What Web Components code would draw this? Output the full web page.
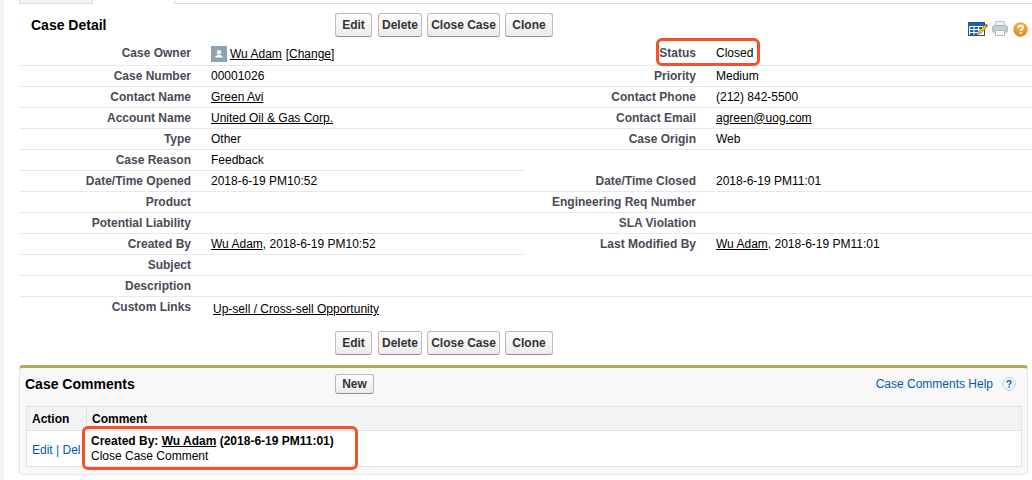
<!DOCTYPE html>
<html lang="en">
<head>
<meta charset="utf-8">
<title>Case Detail</title>
<style>
html,body{margin:0;padding:0;background:#fff;}
body{width:1032px;height:480px;overflow:hidden;font:12px/15px "Liberation Sans",Arial,sans-serif;color:#000;}
</style>
</head>
<body>
<case-page>
  <tab-strip slot="tabs"></tab-strip>
  <case-header>
    <span slot="title">Case Detail</span>
    <case-button style="width:37px">Edit</case-button><case-button style="width:44px;margin-left:1px">Delete</case-button><case-button style="width:73px">Close Case</case-button><case-button style="width:48px">Clone</case-button>
    <page-tools slot="tools"></page-tools>
  </case-header>
  <case-row>
    <case-field first drop label="Case Owner"><user-avatar></user-avatar><case-link>Wu Adam</case-link> <case-link style="margin-left:.5px">[Change]</case-link></case-field>
    <case-field first label="Status">Closed</case-field>
  </case-row>
  <case-row>
    <case-field label="Case Number">00001026</case-field>
    <case-field label="Priority">Medium</case-field>
  </case-row>
  <case-row>
    <case-field label="Contact Name"><case-link>Green Avi</case-link></case-field>
    <case-field label="Contact Phone">(212) 842-5500</case-field>
  </case-row>
  <case-row>
    <case-field label="Account Name"><case-link>United Oil &amp; Gas Corp.</case-link></case-field>
    <case-field label="Contact Email"><case-link>agreen@uog.com</case-link></case-field>
  </case-row>
  <case-row>
    <case-field label="Type">Other</case-field>
    <case-field label="Case Origin">Web</case-field>
  </case-row>
  <case-row>
    <case-field label="Case Reason">Feedback</case-field>
    <case-field noline></case-field>
  </case-row>
  <case-row>
    <case-field label="Date/Time Opened">2018-6-19 PM10:52</case-field>
    <case-field label="Date/Time Closed">2018-6-19 PM11:01</case-field>
  </case-row>
  <case-row>
    <case-field label="Product"></case-field>
    <case-field label="Engineering Req Number"></case-field>
  </case-row>
  <case-row>
    <case-field label="Potential Liability"></case-field>
    <case-field label="SLA Violation"></case-field>
  </case-row>
  <case-row>
    <case-field label="Created By"><case-link>Wu Adam</case-link>, 2018-6-19 PM10:52</case-field>
    <case-field label="Last Modified By" noline><case-link>Wu Adam</case-link>, 2018-6-19 PM11:01</case-field>
  </case-row>
  <case-row>
    <case-field label="Subject"></case-field>
    <case-field></case-field>
  </case-row>
  <case-row>
    <case-field label="Description"></case-field>
    <case-field></case-field>
  </case-row>
  <case-links label="Custom Links"><case-link>Up-sell / Cross-sell Opportunity</case-link></case-links>
  <case-footer>
    <case-button style="width:37px">Edit</case-button><case-button style="width:44px;margin-left:1px">Delete</case-button><case-button style="width:73px">Close Case</case-button><case-button style="width:48px">Clone</case-button>
  </case-footer>
  <comments-panel>
    <case-button slot="new" small>New</case-button>
    <comment-row>
      <span slot="actions">Edit <i style="font-style:normal">|</i> Del</span>
      <b>Created By: <case-link>Wu Adam</case-link> (2018-6-19 PM11:01)</b><br>Close Case Comment
    </comment-row>
  </comments-panel>
  <note-box slot="notes" style="left:656px;top:38px;width:104px;height:28px"></note-box>
  <note-box slot="notes" style="left:82px;top:426px;width:276px;height:44px"></note-box>
</case-page>
<script>
function def(name, html, init){
  customElements.define(name, class extends HTMLElement{
    constructor(){
      super();
      this.attachShadow({mode:'open'}).innerHTML = html;
    }
    connectedCallback(){ if(init) init(this); }
  });
}
def('case-page', `<style>
:host{display:block;position:relative;width:1032px;height:480px;overflow:hidden;background:#fff;}
.wrap{display:flex;height:100%;}
.rail{flex:0 0 4px;background:#f3f5f9;}
.main{flex:1;min-width:0;padding-left:15px;}
</style>
<div class="wrap"><div class="rail"></div><div class="main"><slot name="tabs"></slot><slot></slot></div></div>
<slot name="notes"></slot>`);

def('tab-strip', `<style>
:host{display:flex;height:4px;box-sizing:border-box;}
.off{width:74px;background:#f2f2f2;border:solid #dcdcdc;border-width:0 1px 1px 1px;box-sizing:border-box;}
.on{width:81px;border-right:1px solid #dcdcdc;}
.rest{flex:1;border-bottom:1px solid #dcdcdc;}
</style><div class="off"></div><div class="on"></div><div class="rest"></div>`);

def('case-header', `<style>
:host{display:flex;align-items:flex-start;height:41px;box-sizing:border-box;padding-top:9px;}
.title{width:316px;padding-left:12px;box-sizing:border-box;font:bold 14px/24px "Liberation Sans",Arial,sans-serif;color:#000;}
.btns{display:flex;gap:5px;}
.tools{margin-left:auto;padding-right:4px;padding-top:8px;}
</style><div class="title"><slot name="title"></slot></div><div class="btns"><slot></slot></div><div class="tools"><slot name="tools"></slot></div>`);

def('case-footer', `<style>
:host{display:flex;gap:5px;padding:11px 0 0 316px;height:34px;box-sizing:content-box;}
</style><slot></slot>`);

def('case-button', `<style>
:host{display:inline-flex;align-items:center;justify-content:center;box-sizing:border-box;height:24px;padding:0;
border:1px solid #b9b9b9;border-bottom-color:#8f8f8f;border-radius:3px;background:linear-gradient(#fdfdfd,#ececec);
font:bold 12px/15px "Liberation Sans",Arial,sans-serif;color:#333;white-space:nowrap;}
:host([small]){height:20px;width:39px;}
</style><slot></slot>`);

def('page-tools', `<style>
:host{display:flex;align-items:flex-start;}
svg{display:block;}
</style>
<svg width="20" height="14" viewBox="0 0 20 14" style="margin-top:1px"><rect x=".5" y=".5" width="16" height="13" fill="#fff" stroke="#2f4f7f"/><path d="M1 1h15v3H1z" fill="#1f5fae"/><path d="M2 5h3.500v2H2zM6.500 5H10v2H6.500zM11 5h4v2h-4zM2 8h3.500v2H2zM6.500 8H10v2H6.500zM2 11h3.500v2H2zM6.500 11H9v2H6.500z" fill="#1a62b8"/><path d="M9.500 12.500l1-3L17 3l2 2-6.500 6.500z" fill="#f2c21a" stroke="#7a6320" stroke-width=".6"/><path d="M17 3l1.200-1.200 1.800 1.800L19 5z" fill="#b5506a"/></svg>
<svg width="16" height="15" viewBox="0 0 16 15" style="margin-left:4px"><rect x="3.500" y=".5" width="9" height="5" rx="1" fill="#eef0f1" stroke="#b8c0c4"/><rect x=".5" y="4.500" width="15" height="7" rx="2" fill="#c6cdd0" stroke="#aeb6ba"/><rect x="3.500" y="9.500" width="9" height="5" fill="#f6f7f8" stroke="#b4bcc0"/></svg>
<svg width="15" height="15" viewBox="0 0 15 15" style="margin:1px 0 0 5px"><defs><radialGradient id="o" cx=".5" cy=".3" r=".8"><stop offset="0" stop-color="#f8bb55"/><stop offset="1" stop-color="#d97f10"/></radialGradient></defs><circle cx="7.500" cy="7.500" r="7.200" fill="url(#o)"/><path d="M5.300 5.800C5.400 4.400 6.300 3.700 7.600 3.700 9 3.700 10 4.500 10 5.700 10 7.300 7.800 7.300 7.800 9" fill="none" stroke="#fff" stroke-width="1.700"/><rect x="6.900" y="10" width="1.800" height="1.800" fill="#fff"/></svg>`);

def('user-avatar', `<style>
:host{display:inline-block;width:16px;height:16px;margin-right:3px;vertical-align:-4px;}
svg{display:block;}
</style><svg width="16" height="16" viewBox="0 0 16 16"><rect width="16" height="16" fill="#8ba1b6"/><circle cx="8" cy="6.300" r="2.200" fill="#fff"/><path d="M4.300 11.500c0-1.700 1.600-2.400 3.700-2.400s3.700.7 3.700 2.400z" fill="#fff"/></svg>`);

def('case-link', `<style>
:host{color:#000;text-decoration:underline;}
</style><slot></slot>`);

def('case-row', `<style>
:host{display:grid;grid-template-columns:506px 1fr;}
</style><slot></slot>`);

def('case-field', `<style>
:host{display:grid;grid-template-columns:172px 1fr;column-gap:20px;height:21px;box-sizing:border-box;border-bottom:1px solid #e9e9e9;align-items:center;font:12px/15px "Liberation Sans",Arial,sans-serif;color:#000;white-space:nowrap;}
:host(:nth-child(2)){grid-template-columns:171px 1fr;}
:host([noline]){border-bottom-color:transparent;}
:host([first]){padding-bottom:4px;}
:host([drop]) .v{position:relative;top:1px;}
.l{text-align:right;font-weight:bold;color:#4a4a56;}
</style><div class="l"></div><div class="v"><slot></slot></div>`, el=>{
  el.shadowRoot.querySelector('.l').textContent = el.getAttribute('label') || '';
});

def('case-links', `<style>
:host{display:grid;grid-template-columns:172px 1fr;column-gap:22px;padding-top:3px;height:20px;font:12px/15px "Liberation Sans",Arial,sans-serif;white-space:nowrap;}
.l{text-align:right;font-weight:bold;color:#4a4a56;}
.v{padding-top:2px;}
</style><div class="l"></div><div class="v"><slot></slot></div>`, el=>{
  el.shadowRoot.querySelector('.l').textContent = el.getAttribute('label') || '';
});

def('comments-panel', `<style>
:host{display:block;box-sizing:border-box;width:1009px;height:110px;background:#f8f8f8;border:1px solid #e6e6e6;border-top:3px solid #b8a55c;border-radius:4px;padding:0 6px;}
.head{display:flex;align-items:flex-start;height:38px;padding-top:6px;box-sizing:border-box;}
.t{width:310px;margin-left:-1px;font:bold 14px/20px "Liberation Sans",Arial,sans-serif;color:#000;flex:none;}
.help{margin-left:auto;display:flex;align-items:center;gap:9px;color:#015ba7;font:12px/20px "Liberation Sans",Arial,sans-serif;padding-right:5px;}
svg{display:block;}
.tbl{border:1px solid #e0e3e5;background:#fff;height:61px;box-sizing:border-box;font:12px/15px "Liberation Sans",Arial,sans-serif;width:996px;}
.th{display:flex;height:24px;background:#f2f3f3;border-bottom:1px solid #e0e3e5;box-sizing:border-box;font-weight:bold;color:#000;}
.th div{padding:5px 5px 0;box-sizing:border-box;}
.a{width:60px;border-right:1px solid #e0e3e5;}
</style>
<div class="head"><div class="t">Case Comments</div><slot name="new"></slot><div class="help">Case Comments Help
<svg width="14" height="14" viewBox="0 0 15 15"><circle cx="7.500" cy="7.500" r="6.800" fill="#eef2f7" stroke="#c3cfdc"/><path d="M5.500 5.900C5.500 4.700 6.400 4 7.500 4 8.700 4 9.600 4.700 9.600 5.800 9.600 7.200 7.600 7.300 7.600 8.900" fill="none" stroke="#1a62b8" stroke-width="1.400"/><rect x="6.800" y="9.800" width="1.600" height="1.600" fill="#1a62b8"/></svg></div></div>
<div class="tbl"><div class="th"><div class="a">Action</div><div>Comment</div></div><slot></slot></div>`);

def('comment-row', `<style>
:host{display:flex;height:35px;font:12px/15px "Liberation Sans",Arial,sans-serif;}
.act{width:60px;padding:12px 0 0 5px;box-sizing:border-box;color:#015ba7;white-space:nowrap;overflow:hidden;}
::slotted(span){color:#015ba7;}
.c{padding:3px 4px;white-space:nowrap;}
</style><div class="act"><slot name="actions"></slot></div><div class="c"><slot></slot></div>`);

def('note-box', `<style>
:host{display:block;position:absolute;box-sizing:border-box;border:3px solid #f4502a;border-radius:6px;}
</style>`);
</script>
</body>
</html>
